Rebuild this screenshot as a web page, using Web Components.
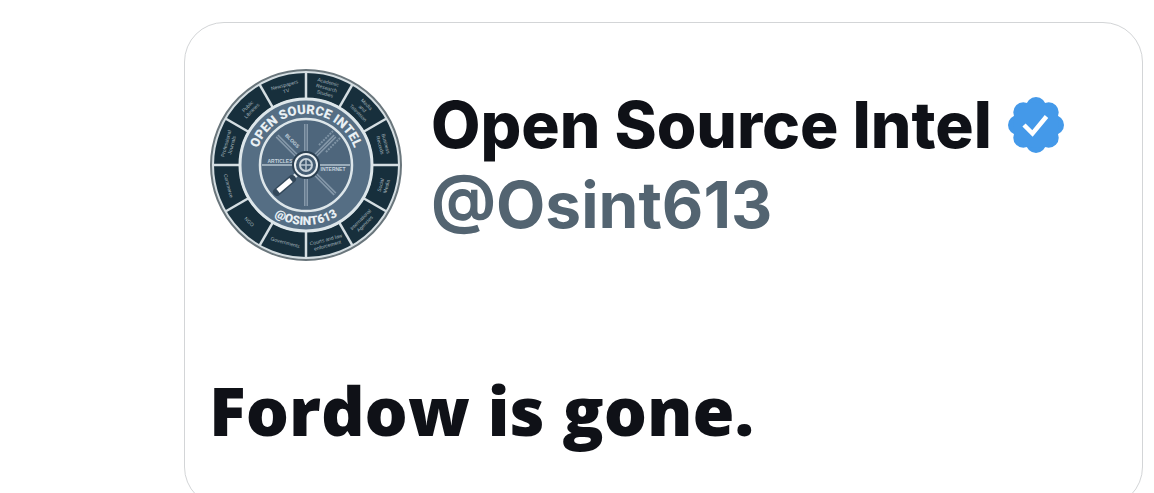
<!DOCTYPE html>
<html lang="en">
<head>
<meta charset="utf-8">
<meta name="viewport" content="width=device-width, initial-scale=1">
<title>Open Source Intel (@Osint613)</title>
<style>
  html { overflow: hidden; }
  body {
    margin: 0;
    padding: 22px 11px 0 184px;
    background: #fff;
    color: #0f1117;
    font-family: "Open Sans", "Noto Sans", sans-serif;
    font-weight: 800;
  }
</style>
</head>
<body>
<post-card>
  <post-author slot="author" name="Open Source Intel" handle="@Osint613">
    <wheel-avatar slot="avatar"></wheel-avatar>
    <verified-badge slot="badge"></verified-badge>
  </post-author>
  Fordow is gone.
</post-card>

<script>
class PostCard extends HTMLElement {
  constructor() {
    super();
    this.attachShadow({ mode: "open" }).innerHTML = `
      <style>
        :host { display: block; }
        article {
          border: 1px solid #d3d5d7;
          border-radius: 40px;
          padding: 45px 24px 48px;
        }
        p { margin: 100px 0 0; font-size: 68px; line-height: 96px; }
      </style>
      <article>
        <slot name="author"></slot>
        <p><slot></slot></p>
      </article>
    `;
  }
}

class PostAuthor extends HTMLElement {
  constructor() {
    super();
    this.attachShadow({ mode: "open" }).innerHTML = `
      <style>
        :host { display: flex; align-items: center; gap: 28px; }
        .names { min-width: 0; font-family: "Inter", sans-serif; font-size: 64px; line-height: 80px; }
        .name { display: flex; align-items: center; gap: 16px; }
        h1 { margin: 0; font: inherit; white-space: nowrap; }
        a { color: #536471; font-weight: 700; text-decoration: none; }
      </style>
      <slot name="avatar"></slot>
      <div class="names">
        <div class="name"><h1></h1><slot name="badge"></slot></div>
        <a href="#"></a>
      </div>
    `;
  }
  connectedCallback() {
    this.shadowRoot.querySelector("h1").textContent = this.getAttribute("name");
    this.shadowRoot.querySelector("a").textContent = this.getAttribute("handle");
  }
}

class VerifiedBadge extends HTMLElement {
  constructor() {
    super();
    // eight round lobes around a solid middle
    let lobes = "";
    for (let a = 0; a < 360; a += 45) {
      lobes += `<circle cx="28" cy="10" r="10" transform="rotate(${a} 28 28)"/>`;
    }
    this.attachShadow({ mode: "open" }).innerHTML = `
      <style>
        :host { display: block; flex: none; width: 56px; height: 56px; }
        svg { display: block; width: 100%; height: 100%; }
      </style>
      <svg viewBox="0 0 56 56" role="img" aria-label="Verified account">
        <g fill="#4499e9">${lobes}<circle cx="28" cy="28" r="23"/></g>
        <path d="M16 28l8.5 8.5 14-17" fill="none" stroke="#fff" stroke-width="4.5"/>
      </svg>
    `;
  }
}

// rim labels, clockwise from the top
const sectors = [
  ["Academic", "Research", "Studies"],
  ["Media", "and", "Television"],
  ["Business", "Records"],
  ["Social", "Media"],
  ["International", "Agencies"],
  ["Courts and law", "enforcement"],
  ["Governments"],
  ["NGO"],
  ["Commerce"],
  ["Professional", "Journals"],
  ["Public", "Libraries"],
  ["Newspapers", "TV"],
];

class WheelAvatar extends HTMLElement {
  constructor() {
    super();
    const dividers = sectors.map((_, i) => `<path d="M0-66V-93" transform="rotate(${i * 30})"/>`).join("");
    const labels = sectors.map((lines, i) => {
      const angle = i * 30 + 15;
      const low = angle > 90 && angle < 270;
      const y = (low ? 80 : -80) + 2 - (lines.length - 1) * 3;
      const rows = lines.map((t, n) => `<text y="${y + n * 6}">${t}</text>`).join("");
      return `<g transform="rotate(${low ? angle - 180 : angle})">${rows}</g>`;
    }).join("");
    this.attachShadow({ mode: "open" }).innerHTML = `
      <style>
        :host { display: block; flex: none; width: 194px; height: 194px; }
        svg { display: block; width: 100%; height: 100%; }
        text { font-family: "Liberation Sans", sans-serif; text-anchor: middle; }
        .rim { font-size: 5px; font-weight: 400; fill: #a3b3bb; }
        .band { font-family: "Roboto", sans-serif; font-size: 13px; font-weight: 900; fill: #e9f0f4; }
        .band.low { font-size: 12px; }
        .tiny { font-size: 5px; font-weight: 700; fill: #c3d1dc; }
      </style>
      <svg viewBox="-97 -97 194 194" role="img" aria-label="Open Source Intel">
        <defs>
          <path id="top" d="M-51 0A51 51 0 0 1 51 0"/>
          <path id="bottom" d="M-60 0A60 60 0 0 0 60 0"/>
          <g id="spoke" fill="none">
            <path d="M0-14V-41" stroke="#8699aa" stroke-width="4"/>
            <path d="M0-14V-41" stroke="#50677c" stroke-width="1"/>
          </g>
        </defs>
        <circle r="95" fill="#d5dee2" stroke="#6a767c" stroke-width="2"/>
        <circle r="79.5" fill="none" stroke="#172f3c" stroke-width="25"/>
        <g stroke="#d5dee2" stroke-width="2.5">${dividers}</g>
        <g class="rim">${labels}</g>
        <circle r="66" fill="#556e84" stroke="#dde6ea" stroke-width="3"/>
        <circle r="46" fill="#4e667c" stroke="#dde6ea" stroke-width="2.5"/>
        <text class="band"><textPath href="#top" startOffset="50%">OPEN SOURCE INTEL</textPath></text>
        <text class="band low"><textPath href="#bottom" startOffset="50%">@OSINT613</textPath></text>
        <use href="#spoke"/>
        <use href="#spoke" transform="rotate(45)"/>
        <use href="#spoke" transform="rotate(135)"/>
        <use href="#spoke" transform="rotate(180)"/>
        <use href="#spoke" transform="rotate(315)"/>
        <path d="M-44 0H44" stroke="#b5c4cf" stroke-width="1.5"/>
        <path d="M13-20L27-34M20-13L34-27" stroke="#7f94a5" stroke-width="2" stroke-dasharray="2 1"/>
        <text class="tiny" x="-26" y="-2">ARTICLES</text>
        <text class="tiny" x="27" y="6">INTERNET</text>
        <text class="tiny" transform="translate(-15 -23) rotate(45)">BLOGS</text>
        <path d="M-8 8L-15 15" stroke="#dfe7ec" stroke-width="4"/>
        <path d="M-14 14L-29 27" stroke="#33485a" stroke-width="8" stroke-linecap="round"/>
        <path d="M-15 15L-28 26" stroke="#fff" stroke-width="5"/>
        <circle r="12" fill="#425a70" stroke="#2b3f50" stroke-width="4"/>
        <circle r="11" fill="none" stroke="#e9eff2" stroke-width="2"/>
        <circle r="6" fill="none" stroke="#c5d0d8" stroke-width="2"/>
        <path d="M-5 0H5M0-5V5" stroke="#b5c4cf" stroke-width="1.5"/>
      </svg>
    `;
  }
}

customElements.define("wheel-avatar", WheelAvatar);
customElements.define("verified-badge", VerifiedBadge);
customElements.define("post-author", PostAuthor);
customElements.define("post-card", PostCard);
</script>
</body>
</html>
